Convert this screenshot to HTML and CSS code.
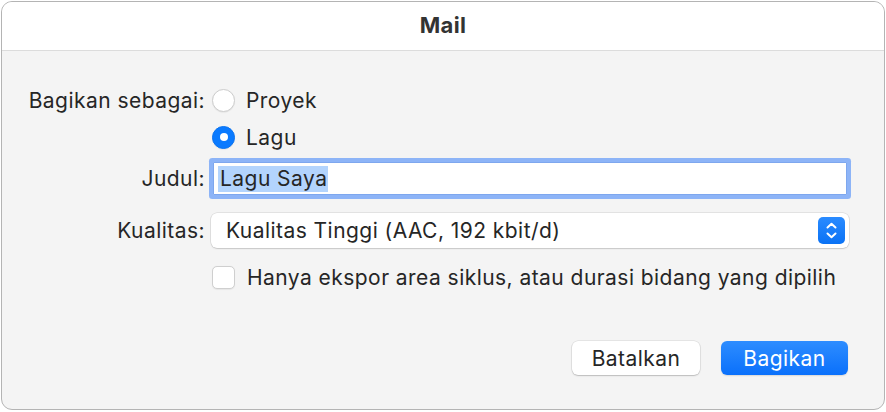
FILE: index.html
```html
<!DOCTYPE html>
<html lang="id">
<head>
<meta charset="utf-8">
<title>Mail</title>
<link rel="stylesheet" href="styles.css">
</head>
<body>
<div class="window">
  <div class="titlebar">Mail</div>
  <div class="content">
    <div class="row row-radio1">
      <div class="label">Bagikan sebagai:</div>
      <div class="control">
        <span class="radio"></span><span class="opt">Proyek</span>
      </div>
    </div>
    <div class="row row-radio2">
      <div class="label"></div>
      <div class="control">
        <span class="radio checked"></span><span class="opt">Lagu</span>
      </div>
    </div>
    <div class="row row-field">
      <div class="label">Judul:</div>
      <div class="control">
        <div class="field"><span class="sel">Lagu Saya</span></div>
      </div>
    </div>
    <div class="row row-popup">
      <div class="label">Kualitas:</div>
      <div class="control">
        <div class="popup">
          <span class="popup-text">Kualitas Tinggi (AAC, 192 kbit/d)</span>
          <span class="stepper">
            <svg width="27" height="27" viewBox="0 0 27 27">
              <path d="M9.5 10.5 L13.5 6.8 L17.5 10.5" fill="none" stroke="#fff" stroke-width="2" stroke-linecap="round" stroke-linejoin="round"/>
              <path d="M9.5 16.5 L13.5 20.2 L17.5 16.5" fill="none" stroke="#fff" stroke-width="2" stroke-linecap="round" stroke-linejoin="round"/>
            </svg>
          </span>
        </div>
      </div>
    </div>
    <div class="row row-check">
      <div class="label"></div>
      <div class="control">
        <span class="checkbox"></span><span class="opt">Hanya ekspor area siklus, atau durasi bidang yang dipilih</span>
      </div>
    </div>
    <div class="buttons">
      <button class="btn">Batalkan</button>
      <button class="btn primary">Bagikan</button>
    </div>
  </div>
</div>
</body>
</html>
```
FILE: styles.css
```css
* { box-sizing: border-box; }
html, body { margin: 0; padding: 0; background: #ffffff; }
body {
  font-family: Inter, "Liberation Sans", sans-serif;
  color: #262626;
  font-size: 21px;
  letter-spacing: 0.45px;
}
.window {
  margin: 1px 0 0 1px;
  width: 884px;
  height: 409px;
  border: 1px solid #b4b4b4;
  border-radius: 11px;
  overflow: hidden;
  background: #f4f4f4;
}
.titlebar {
  height: 49px;
  background: #ffffff;
  border-bottom: 1px solid #dcdcdc;
  text-align: center;
  font-weight: 700;
  font-size: 22px;
  letter-spacing: 0.3px;
  line-height: 46px;
  color: #333333;
}
.content {
  padding: 37px 35px 0 0;
}
.row {
  display: flex;
  align-items: center;
}
.label {
  width: 203px;
  text-align: right;
  flex: none;
}
.control {
  flex: 1;
  display: flex;
  align-items: center;
  margin-left: 7px;
}
.row-radio1 { height: 24px; }
.row-radio2 { height: 24px; margin-top: 13px; }
.row-field { height: 33px; margin-top: 13px; }
.row-popup { height: 35px; margin-top: 18px; }
.row-check { height: 23px; margin-top: 18px; }

.radio {
  width: 23px;
  height: 23px;
  border-radius: 50%;
  background: #fff;
  border: 1px solid #cdcdcd;
  box-shadow: 0 0.5px 1px rgba(0,0,0,0.08);
  flex: none;
  position: relative;
}
.radio.checked {
  background: #0a7aff;
  border-color: #0a74f2;
}
.radio.checked::after {
  content: "";
  position: absolute;
  left: 6.5px;
  top: 6.5px;
  width: 8px;
  height: 8px;
  border-radius: 50%;
  background: #fff;
}
.opt { margin-left: 11px; }

.field {
  margin-left: 1px;
  width: 634px;
  height: 33px;
  background: #fff;
  border: 1px solid #7ea7ee;
  box-shadow: 0 0 0 4px #8db4f7;
  border-radius: 1px;
  display: flex;
  align-items: center;
  padding-left: 4px;
}
.sel {
  background: #b3d4fd;
  line-height: 26px;
  padding: 0 1px 0 2px;
}
.popup {
  margin-left: -1px;
  width: 638px;
  height: 35px;
  background: #fff;
  border-radius: 6px;
  box-shadow: 0 0 0 0.5px rgba(0,0,0,0.14), 0 1px 1.5px rgba(0,0,0,0.12);
  display: flex;
  align-items: center;
  justify-content: space-between;
  padding: 0 4px 0 15px;
}
.stepper {
  width: 27px;
  height: 27px;
  border-radius: 5px;
  background: linear-gradient(#2a8bff, #0a72f5);
  display: block;
}
.stepper svg { display: block; }
.checkbox {
  width: 23px;
  height: 23px;
  border-radius: 5px;
  background: #fff;
  border: 1px solid #cfcfcf;
  box-shadow: 0 0.5px 1px rgba(0,0,0,0.06);
  flex: none;
}
.row-check .opt { margin-left: 12px; }

.buttons {
  display: flex;
  justify-content: flex-end;
  gap: 21px;
  margin-top: 52px;
  margin-right: 1px;
}
.btn {
  font-family: inherit;
  font-size: 21px;
  letter-spacing: 0.45px;
  width: 128px;
  height: 34px;
  border-radius: 6px;
  border: none;
  background: #fff;
  color: #262626;
  box-shadow: 0 0 0 0.5px rgba(0,0,0,0.12), 0 1px 1.5px rgba(0,0,0,0.18);
  padding: 0;
}
.btn.primary {
  width: 127px;
  background: linear-gradient(#2e8dff, #0a70fb);
  color: #fff;
  box-shadow: 0 1px 1.5px rgba(0,0,0,0.12);
}
```
